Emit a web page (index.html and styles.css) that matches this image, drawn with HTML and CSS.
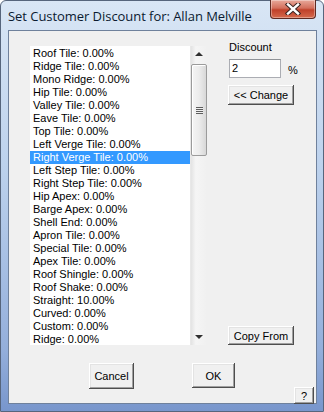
FILE: index.html
```html
<!DOCTYPE html>
<html lang="en">
<head>
    <meta charset="UTF-8">
    <title>Set Customer Discount</title>
    <link rel="stylesheet" href="styles.css">
</head>
<body>
<div class="window">
    <div class="titlebar">
        <span class="title">Set Customer Discount for: Allan Melville</span>
        <span class="close">
            <svg width="16" height="12" viewBox="0 0 16 12">
                <path d="M3 1.5 L13 10.5 M13 1.5 L3 10.5" stroke="#3a2320" stroke-width="4.4" stroke-linecap="square"/>
                <path d="M3 1.5 L13 10.5 M13 1.5 L3 10.5" stroke="#ffffff" stroke-width="2.4" stroke-linecap="square"/>
            </svg>
        </span>
    </div>
    <div class="client">
        <div class="main">
            <div class="listbox">
                <ul class="items">
                    <li>Roof Tile: 0.00%</li>
                    <li>Ridge Tile: 0.00%</li>
                    <li>Mono Ridge: 0.00%</li>
                    <li>Hip Tile: 0.00%</li>
                    <li>Valley Tile: 0.00%</li>
                    <li>Eave Tile: 0.00%</li>
                    <li>Top Tile: 0.00%</li>
                    <li>Left Verge Tile: 0.00%</li>
                    <li class="selected">Right Verge Tile: 0.00%</li>
                    <li>Left Step Tile: 0.00%</li>
                    <li>Right Step Tile: 0.00%</li>
                    <li>Hip Apex: 0.00%</li>
                    <li>Barge Apex: 0.00%</li>
                    <li>Shell End: 0.00%</li>
                    <li>Apron Tile: 0.00%</li>
                    <li>Special Tile: 0.00%</li>
                    <li>Apex Tile: 0.00%</li>
                    <li>Roof Shingle: 0.00%</li>
                    <li>Roof Shake: 0.00%</li>
                    <li>Straight: 10.00%</li>
                    <li>Curved: 0.00%</li>
                    <li>Custom: 0.00%</li>
                    <li>Ridge: 0.00%</li>
                </ul>
                <div class="scrollbar">
                    <div class="arrow up"></div>
                    <div class="track">
                        <div class="thumb"><span class="grip"></span></div>
                    </div>
                    <div class="arrow down"></div>
                </div>
            </div>
            <div class="side">
                <span class="label">Discount</span>
                <div class="field">
                    <span class="input">2</span>
                    <span class="pct">%</span>
                </div>
                <button class="btn change">&lt;&lt; Change</button>
                <button class="btn copy">Copy From</button>
            </div>
        </div>
        <div class="bottom">
            <button class="btn cancel">Cancel</button>
            <button class="btn ok">OK</button>
            <button class="btn help">?</button>
        </div>
    </div>
</div>
</body>
</html>
```

FILE: styles.css
```css
*{
    margin: 0;
    padding: 0;
    box-sizing: border-box;
}
body{
    background: #ffffff;
    font-family: "Liberation Sans", Arial, sans-serif;
    font-size: 11px;
    color: #000000;
}
ul{
    list-style: none;
}
.window{
    width: 324px;
    height: 412px;
    padding: 0 8px 0 7px;
    background: linear-gradient(#d9e6f5, #bdd2ed 40%, #94afdb 85%, #7896cc);
    border: 1px solid #56657c;
    border-radius: 6px 6px 0 0;
}
.titlebar{
    height: 29px;
    display: flex;
    justify-content: space-between;
    align-items: flex-start;
}
.title{
    margin-top: 6px;
    font-family: "Open Sans", "Noto Sans", sans-serif;
    font-size: 13px;
    color: #0b1a30;
    letter-spacing: -0.05px;
}
.close{
    width: 46px;
    height: 19px;
    margin-top: -1px;
    margin-right: -1px;
    display: flex;
    align-items: center;
    justify-content: center;
    background: linear-gradient(#e8a99b, #d36f5c 45%, #c0412a 55%, #d56a4d);
    border: 1px solid #5e2a22;
    border-top: none;
    border-radius: 0 0 4px 4px;
    box-shadow: inset 0 0 0 1px rgba(255,255,255,0.35);
}
.client{
    width: 309px;
    height: 374px;
    background: #f0f0f0;
    border: 1px solid #6f819c;
    padding-top: 10px;
}
.main{
    display: flex;
    margin-left: 21px;
}
.listbox{
    width: 177px;
    height: 299px;
    margin-top: 5px;
    background: #ffffff;
    display: flex;
    justify-content: space-between;
}
.items{
    padding-top: 1px;
    flex: 1;
}
.items li{
    height: 13px;
    line-height: 13px;
    padding-left: 3px;
    white-space: nowrap;
}
.items .selected{
    background: #3399ff;
    color: #ffffff;
}
.scrollbar{
    width: 17px;
    display: flex;
    flex-direction: column;
    background: linear-gradient(to right, #e3e3e3, #f5f5f5 30%, #f0f0f0);
    border-left: 1px solid #e8e8e8;
}
.arrow{
    height: 17px;
    position: relative;
}
.arrow::after{
    content: "";
    position: absolute;
    left: 4px;
    border-left: 4px solid transparent;
    border-right: 4px solid transparent;
}
.arrow.up::after{
    top: 6px;
    border-bottom: 4px solid #303030;
}
.arrow.down::after{
    top: 7px;
    border-top: 4px solid #303030;
}
.track{
    flex: 1;
}
.thumb{
    height: 92px;
    margin: 1px 0 0 0;
    border: 1px solid #9b9b9b;
    border-radius: 2px;
    background: linear-gradient(to right, #f5f5f5, #ececec 50%, #d8d8d8);
    box-shadow: inset 1px 1px 0 #ffffff;
    display: flex;
    align-items: center;
    justify-content: center;
}
.grip{
    width: 7px;
    height: 7px;
    background: repeating-linear-gradient(#5d5d5d 0, #5d5d5d 1px, #f0f0f0 1px, #f0f0f0 2px);
}
.side{
    width: 66px;
    margin-left: 21px;
    display: flex;
    flex-direction: column;
    align-items: flex-start;
}
.label{
    line-height: 13px;
    margin-left: 1px;
}
.field{
    margin-top: 5px;
    margin-left: 1px;
    display: flex;
    align-items: center;
}
.input{
    width: 52px;
    height: 19px;
    line-height: 17px;
    padding-left: 2px;
    background: #ffffff;
    border: 1px solid #abadb3;
    border-top-color: #8f9297;
}
.pct{
    margin-left: 7px;
    margin-top: 2px;
}
.btn{
    font-family: "Liberation Sans", Arial, sans-serif;
    font-size: 11px;
    color: #000000;
    background: #f0f0f0;
    border: none;
    box-shadow: inset -1px -1px #4e4e4e, inset 1px 1px #ffffff, inset -2px -2px #a0a0a0, inset 2px 2px #e3e3e3;
}
.change{
    width: 66px;
    height: 20px;
    margin-top: 7px;
}
.copy{
    width: 66px;
    height: 19px;
    margin-top: auto;
}
.bottom{
    display: flex;
    align-items: flex-start;
    margin-top: 18px;
    padding-left: 80px;
}
.cancel{
    width: 45px;
    height: 26px;
}
.ok{
    width: 43px;
    height: 25px;
    margin-left: 58px;
}
.help{
    width: 20px;
    height: 17px;
    margin-top: 24px;
    margin-left: auto;
    margin-right: 2px;
}
```
